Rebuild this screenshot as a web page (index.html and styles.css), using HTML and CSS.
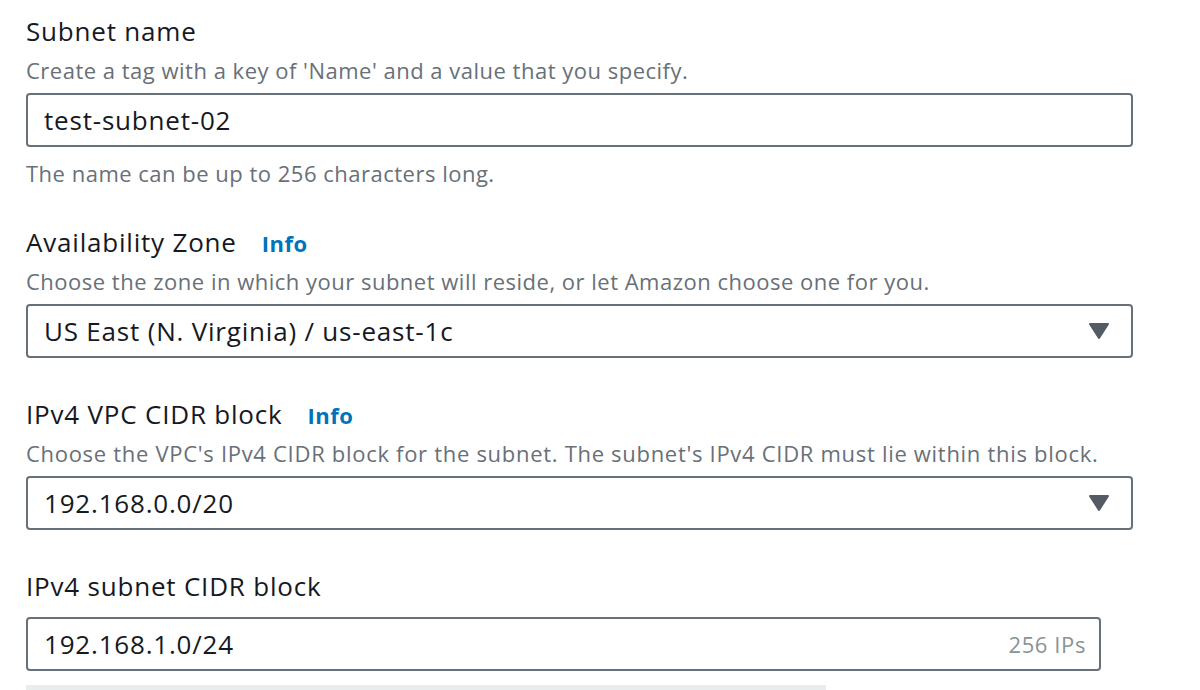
FILE: index.html
```html
<!DOCTYPE html>
<html>
<head>
<meta charset="utf-8">
<link rel="stylesheet" href="styles.css">
</head>
<body>
<div class="form">
  <div class="field first">
    <div class="label">Subnet name</div>
    <div class="desc">Create a tag with a key of 'Name' and a value that you specify.</div>
    <div class="input"><span class="value">test-subnet-02</span></div>
    <div class="constraint">The name can be up to 256 characters long.</div>
  </div>
  <div class="field">
    <div class="label">Availability Zone<span class="info">Info</span></div>
    <div class="desc">Choose the zone in which your subnet will reside, or let Amazon choose one for you.</div>
    <div class="input select"><span class="value">US East (N. Virginia) / us-east-1c</span><svg class="caret" width="20" height="16" viewBox="0 0 20 16"><path d="M1 1 H19 L10 15 Z" fill="#545b64" stroke="#545b64" stroke-width="2" stroke-linejoin="round"/></svg></div>
  </div>
  <div class="field spaced">
    <div class="label">IPv4 VPC CIDR block<span class="info">Info</span></div>
    <div class="desc wide">Choose the VPC's IPv4 CIDR block for the subnet. The subnet's IPv4 CIDR must lie within this block.</div>
    <div class="input select"><span class="value">192.168.0.0/20</span><svg class="caret" width="20" height="16" viewBox="0 0 20 16"><path d="M1 1 H19 L10 15 Z" fill="#545b64" stroke="#545b64" stroke-width="2" stroke-linejoin="round"/></svg></div>
  </div>
  <div class="field spaced nodesc">
    <div class="label">IPv4 subnet CIDR block</div>
    <div class="input short"><span class="value">192.168.1.0/24</span><span class="suffix">256 IPs</span></div>
  </div>
  <div class="bar"></div>
</div>
</body>
</html>
```
FILE: styles.css
```css
html, body {
  margin: 0;
  padding: 0;
  background: #ffffff;
}
body {
  font-family: "Open Sans", "Noto Sans", sans-serif;
  color: #16191f;
}
.form {
  padding: 13px 0 0 26px;
  width: 1107px;
}
.field {
  display: flex;
  flex-direction: column;
  margin-top: 36px;
}
.field.first {
  margin-top: 0;
}
.field.spaced {
  margin-top: 38px;
}
.label {
  font-size: 26px;
  letter-spacing: 0.8px;
  line-height: 36px;
  height: 36px;
  white-space: nowrap;
}
.info {
  color: #0073bb;
  font-weight: 700;
  font-size: 22px;
  letter-spacing: 0.5px;
  margin-left: 25px;
}
.desc {
  font-size: 22px;
  letter-spacing: 0.5px;
  line-height: 30px;
  color: #687078;
  margin-top: 6px;
  white-space: nowrap;
}
.desc.wide {
  letter-spacing: 0.7px;
}
.input {
  box-sizing: border-box;
  height: 54px;
  border: 2px solid #687078;
  border-radius: 4px;
  display: flex;
  align-items: center;
  padding: 0 22px 0 16px;
  margin-top: 8px;
  font-size: 26px;
  letter-spacing: 0.8px;
}
.nodesc .input {
  margin-top: 13px;
}
.input.short {
  width: 1075px;
  padding-right: 13px;
}
.value {
  flex: 1;
  white-space: nowrap;
}
.suffix {
  color: #879596;
  font-size: 22px;
  letter-spacing: 0.6px;
}
.caret {
  display: block;
}
.constraint {
  font-size: 22px;
  letter-spacing: 0.5px;
  line-height: 30px;
  color: #687078;
  margin-top: 11px;
}
.bar {
  margin-top: 14px;
  width: 800px;
  height: 10px;
  background: #eaeded;
}
```
